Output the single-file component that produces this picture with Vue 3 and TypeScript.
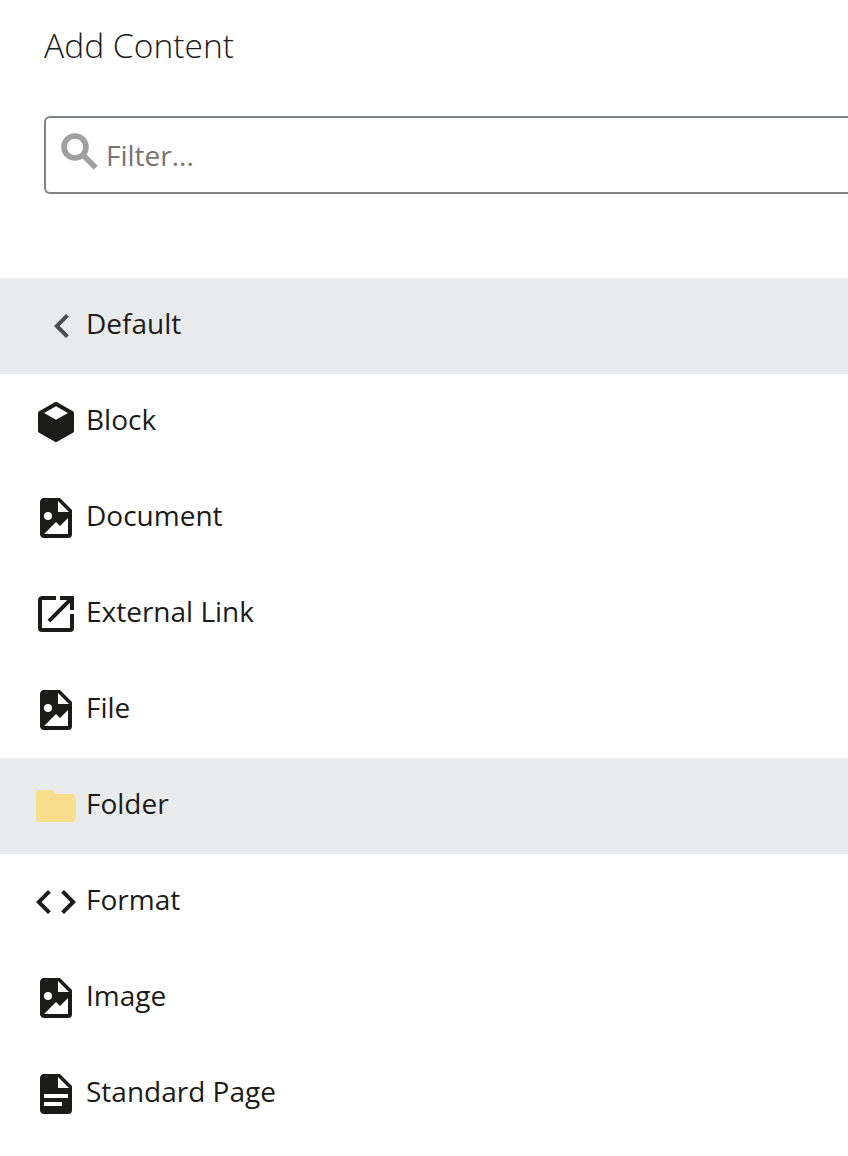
<script setup lang="ts">
interface Item {
  label: string
  icon: string
  kind?: string
}

const image =
  'M13,9H18.5L13,3.5V9M6,2H14L20,8V20A2,2 0 0,1 18,22H6C4.89,22 4,21.1 4,20V4C4,2.89 4.89,2 6,2M6,20H15L18,20V12L14,16L12,14L6,20M8,9A2,2 0 0,0 6,11A2,2 0 0,0 8,13A2,2 0 0,0 10,11A2,2 0 0,0 8,9Z'

const items: Item[] = [
  { label: 'Default', icon: 'M15.41,16.58L10.83,12L15.41,7.41L14,6L8,12L14,18L15.41,16.58Z', kind: 'back' },
  {
    label: 'Block',
    icon: 'M21,16.5C21,16.88 20.79,17.21 20.47,17.38L12.57,21.82C12.41,21.94 12.21,22 12,22C11.79,22 11.59,21.94 11.43,21.82L3.53,17.38C3.21,17.21 3,16.88 3,16.5V7.5C3,7.12 3.21,6.79 3.53,6.62L11.43,2.18C11.59,2.06 11.79,2 12,2C12.21,2 12.41,2.06 12.57,2.18L20.47,6.62C20.79,6.79 21,7.12 21,7.5V16.5M12,4.15L6.04,7.5L12,10.85L17.96,7.5L12,4.15Z',
  },
  { label: 'Document', icon: image },
  {
    label: 'External Link',
    icon: 'M14,3V5H17.59L7.76,14.83L9.17,16.24L19,6.41V10H21V3M19,19H5V5H12V3H5C3.89,3 3,3.9 3,5V19A2,2 0 0,0 5,21H19A2,2 0 0,0 21,19V12H19V19Z',
  },
  { label: 'File', icon: image },
  {
    label: 'Folder',
    icon: 'M10,4H4C2.89,4 2,4.89 2,6V18A2,2 0 0,0 4,20H20A2,2 0 0,0 22,18V8C22,6.89 21.1,6 20,6H12L10,4Z',
    kind: 'folder',
  },
  {
    label: 'Format',
    icon: 'M9.4,16.6L4.8,12L9.4,7.4L8,6L2,12L8,18L9.4,16.6M14.6,16.6L19.2,12L14.6,7.4L16,6L22,12L16,18L14.6,16.6Z',
  },
  { label: 'Image', icon: image },
  {
    label: 'Standard Page',
    icon: 'M13,9H18.5L13,3.5V9M6,2H14L20,8V20A2,2 0 0,1 18,22H6C4.89,22 4,21.1 4,20V4C4,2.89 4.89,2 6,2M15,18V16H6V18H15M18,14V12H6V14H18Z',
  },
]
</script>

<template>
  <main class="panel">
    <h1 class="title">Add Content</h1>
    <label class="filter">
      <svg class="search" viewBox="0 0 38 38">
        <circle cx="14" cy="14" r="11" />
        <path d="M22 22L34.7 34.7" />
      </svg>
      <input class="input" type="text" placeholder="Filter..." />
    </label>
    <ul class="list">
      <li v-for="item in items" :key="item.label" class="row" :class="item.kind">
        <svg class="icon" viewBox="0 0 24 24"><path :d="item.icon" /></svg>
        <span class="label">{{ item.label }}</span>
      </li>
    </ul>
  </main>
</template>

<style>
body {
  background: #fff;
  overflow: hidden;
}
</style>

<style scoped>
.panel {
  box-sizing: border-box;
  height: 1156px;
  overflow: hidden;
  font-family: 'Open Sans', 'Noto Sans', sans-serif;
  color: #1b1b1a;
}
.title {
  margin: 0;
  padding: 21px 0 0 44px;
  height: 95px;
  font-size: 33.6px;
  line-height: 48px;
  font-weight: 300;
}
.filter {
  box-sizing: border-box;
  display: flex;
  align-items: flex-start;
  height: 78px;
  margin-left: 44px;
  padding: 15px 0 0 15px;
  border: 2px solid #808386;
  border-right: 0;
  border-radius: 6px 0 0 6px;
}
.search {
  flex: none;
  width: 38px;
  height: 38px;
  fill: none;
  stroke: #a0a0a0;
  stroke-width: 5.6;
}
.input {
  flex: 1;
  min-width: 0;
  margin: 2px 0 0 7px;
  padding: 0;
  border: 0;
  outline: 0;
  background: none;
  font: 400 28px/40px 'Open Sans', 'Noto Sans', sans-serif;
  height: 40px;
}
.input::placeholder {
  color: #757575;
  opacity: 1;
}
.list {
  list-style: none;
  margin: 84px 0 0;
  padding: 0;
}
.row {
  box-sizing: border-box;
  display: flex;
  align-items: center;
  height: 96px;
  padding-left: 32px;
}
.icon {
  flex: none;
  width: 48px;
  height: 48px;
  margin-right: 6px;
  fill: #1b1b1a;
}
.label {
  font-size: 28px;
  line-height: 40px;
  padding-bottom: 6px;
  white-space: nowrap;
}
.back,
.folder {
  background: #eaebed;
}
.back {
  padding-left: 38px;
}
.back .icon {
  margin-right: 0;
  fill: #4c4c4c;
}
.folder .icon {
  fill: #f9de8b;
}
</style>
